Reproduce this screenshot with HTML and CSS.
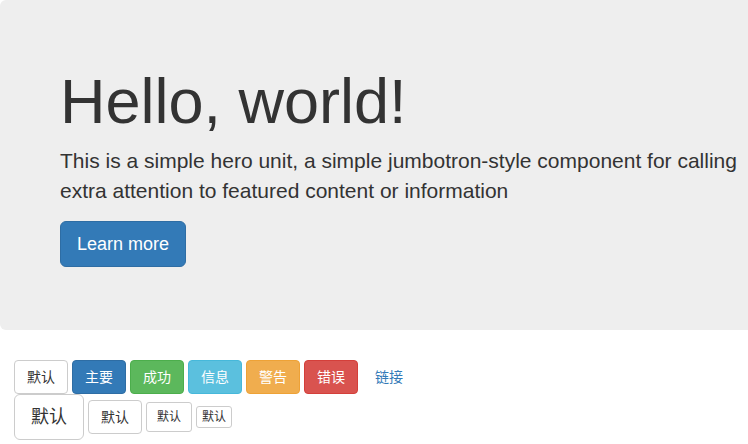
FILE: index.html
```html
<!DOCTYPE html>
<html lang="zh-CN">
<head>
<meta charset="utf-8">
<title>Jumbotron</title>
<link rel="stylesheet" href="styles.css">
</head>
<body>
<div class="jumbotron">
  <h1>Hello, world!</h1>
  <p>This is a simple hero unit, a simple jumbotron-style component for calling extra attention to featured content or information</p>
  <p class="actions"><a class="btn btn-primary btn-lg btn-hero" href="#">Learn more</a></p>
</div>
<div class="btn-row row-one">
  <button class="btn btn-default">默认</button>
  <button class="btn btn-primary">主要</button>
  <button class="btn btn-success">成功</button>
  <button class="btn btn-info">信息</button>
  <button class="btn btn-warning">警告</button>
  <button class="btn btn-danger">错误</button>
  <button class="btn btn-link">链接</button>
</div>
<div class="btn-row row-two">
  <button class="btn btn-default btn-lg">默认</button>
  <button class="btn btn-default">默认</button>
  <button class="btn btn-default btn-sm">默认</button>
  <button class="btn btn-default btn-xs">默认</button>
</div>
</body>
</html>
```

FILE: styles.css
```css
html, body {
  margin: 0;
  padding: 0;
  overflow: hidden;
}
body {
  font-family: "Liberation Sans", Arial, "Noto Sans CJK SC", sans-serif;
  font-size: 14px;
  line-height: 1.42857143;
  color: #333;
  background: #fff;
}
.jumbotron {
  box-sizing: border-box;
  width: 820px;
  padding: 47px 60px 48px 60px;
  margin-bottom: 30px;
  background: #eee;
  border-radius: 6px;
}
.jumbotron h1 {
  margin: 20px 0 10px;
  font-size: 63px;
  font-weight: 500;
  line-height: 1.1;
  color: #333;
}
.jumbotron p {
  margin: 0 0 15px;
  font-size: 21px;
  line-height: 30px;
}
.jumbotron .actions {
  margin-bottom: 15px;
  height: 46px;
}
.btn-hero {
  margin-left: -1px;
}
.btn-row {
  display: flex;
  gap: 4px;
  padding-left: 14px;
}
.row-two {
  align-items: center;
}
.btn {
  box-sizing: border-box;
  display: inline-block;
  margin: 0;
  padding: 6px 12px;
  font-family: "Liberation Sans", Arial, "Noto Sans CJK SC", sans-serif;
  font-size: 14px;
  line-height: 20px;
  height: 34px;
  border: 1px solid transparent;
  border-radius: 4px;
  text-decoration: none;
  text-align: center;
  white-space: nowrap;
  cursor: pointer;
}
.btn-default { color: #333; background: #fff; border-color: #ccc; }
.btn-primary { color: #fff; background: #337ab7; border-color: #2e6da4; }
.btn-success { color: #fff; background: #5cb85c; border-color: #4cae4c; }
.btn-info { color: #fff; background: #5bc0de; border-color: #46b8da; }
.btn-warning { color: #fff; background: #f0ad4e; border-color: #eea236; }
.btn-danger { color: #fff; background: #d9534f; border-color: #d43f3a; }
.btn-link { color: #337ab7; background: transparent; border-color: transparent; }
.btn-lg {
  padding: 10px 16px;
  font-size: 18px;
  line-height: 24px;
  height: 46px;
  border-radius: 6px;
}
.btn-sm {
  padding: 4px 10px;
  font-size: 12px;
  line-height: 20px;
  height: 30px;
  border-radius: 3px;
}
.btn-xs {
  padding: 1px 5px;
  font-size: 12px;
  line-height: 18px;
  height: 22px;
  border-radius: 3px;
}
```
